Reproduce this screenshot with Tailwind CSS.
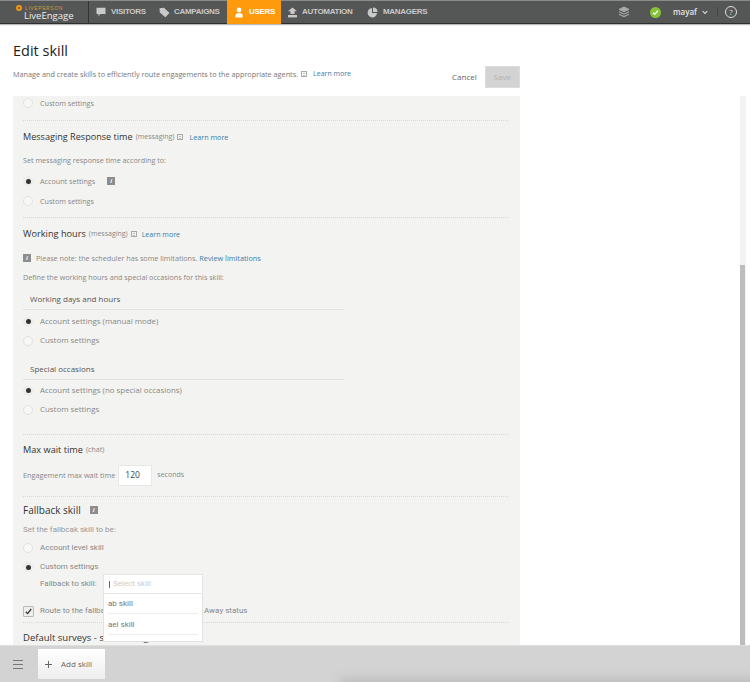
<!DOCTYPE html>
<html>
<head>
<meta charset="utf-8">
<script src="https://cdn.jsdelivr.net/npm/@tailwindcss/browser@4"></script>
</head>
<body class="font-['Open_Sans',sans-serif] bg-white">
<div class="relative flex flex-col w-[750px] h-[682px] overflow-hidden bg-white">

  <!-- Top navigation -->
  <header class="flex items-stretch h-[24px] shrink-0 bg-[#555656] border-t border-t-[#8a8a8a] border-b border-b-[#2e2e2e] shadow-[0_1px_1px_#bbb] font-['Liberation_Sans',sans-serif] font-bold text-[8px] tracking-[-0.3px] text-[#c9c9c9]">
    <div class="relative w-[89px] shrink-0 border-r border-r-[#333] tracking-normal">
      <div class="absolute left-[16px] top-[4px] flex items-center gap-[3px]">
        <span class="w-[6px] h-[6px] rounded-full border-[2px] border-[#f5970f]"></span>
        <span class="text-[5px] tracking-[0.6px] text-[#d9963a] font-normal leading-none">LIVEPERSON</span>
      </div>
      <div class="absolute left-[24px] top-[10px] text-[9.5px] leading-[10px] font-normal text-[#eee] font-['Open_Sans',sans-serif]">LiveEngage</div>
    </div>
    <a class="flex items-center w-[70px] shrink-0 pl-[7px] gap-[5px]">
      <svg class="w-[10px] h-[10px] shrink-0" viewBox="0 0 10 10"><path d="M0.5 0.8h9v6.2H4.2L2.5 9.4V7H.5z" fill="#c9c9c9"/></svg>
      <span>VISITORS</span>
    </a>
    <a class="flex items-center w-[68px] shrink-0 gap-[4px]">
      <svg class="w-[11px] h-[11px] shrink-0" viewBox="0 0 11 11"><path d="M.5 1.2l4.4-.5 5.6 5.4-4.2 4.2L.8 5.6z" fill="#c9c9c9"/></svg>
      <span class="whitespace-nowrap">CAMPAIGNS</span>
    </a>
    <a class="flex items-center w-[54px] shrink-0 pl-[8px] gap-[6px] bg-[#ff9a0d] text-white -mt-px -mb-px">
      <svg class="w-[8px] h-[11px] shrink-0" viewBox="0 0 9 12"><circle cx="4.5" cy="3.2" r="2.7" fill="#fff"/><path d="M.5 11.5V9C.5 7.5 2 6.8 4.5 6.8S8.5 7.5 8.5 9v2.5z" fill="#fff"/></svg>
      <span>USERS</span>
    </a>
    <a class="flex items-center w-[86px] shrink-0 pl-[6px] gap-[4px]">
      <svg class="w-[11px] h-[11px] shrink-0" viewBox="0 0 11 11"><path d="M5.5 .5L10 4.2H7.6V7H3.4V4.2H1z" fill="#c9c9c9"/><rect x="1" y="8" width="9" height="2.4" fill="#c9c9c9"/></svg>
      <span>AUTOMATION</span>
    </a>
    <a class="flex items-center shrink-0 gap-[5px]">
      <svg class="w-[11px] h-[11px] shrink-0" viewBox="0 0 11 11"><path d="M5 1A4.7 4.7 0 1 0 10 6H5z" fill="#c9c9c9"/><path d="M6 .5A4.6 4.6 0 0 1 10.5 5H6z" fill="#c9c9c9"/></svg>
      <span>MANAGERS</span>
    </a>
    <div class="ml-auto flex items-center pr-[13px] font-['Open_Sans',sans-serif] tracking-normal">
      <svg class="w-[12px] h-[12px] mr-[20px]" viewBox="0 0 12 12" fill="none" stroke="#a8a8a8"><path d="M6 1l5 2.4-5 2.4-5-2.4z" fill="#a8a8a8"/><path d="M1 5.8l5 2.4 5-2.4M1 8.2l5 2.4 5-2.4" stroke-width="1.2"/></svg>
      <span class="flex items-center justify-center w-[11px] h-[11px] rounded-full bg-[#84c436] mr-[12px]">
        <svg class="w-[7px] h-[7px]" viewBox="0 0 7 7" fill="none" stroke="#fff" stroke-width="1.4"><path d="M1 3.7l1.7 1.6L6 1.8"/></svg>
      </span>
      <span class="text-[8px] text-[#e4e4e4] font-semibold">mayaf</span>
      <svg class="w-[6px] h-[5px] ml-[5px]" viewBox="0 0 7 5" fill="none" stroke="#ddd" stroke-width="1.3"><path d="M.8 .9l2.7 2.7L6.2 .9"/></svg>
      <span class="w-px h-[10px] bg-[#444] ml-[9px] mr-[7px]"></span>
      <span class="flex items-center justify-center w-[12px] h-[12px] rounded-full border border-[#ddd] text-[8px] leading-none text-[#ddd] font-normal">?</span>
    </div>
  </header>

  <!-- Page header -->
  <div class="relative h-[72px] shrink-0 pl-[13px] text-[#777]">
    <h1 class="pt-[17px] text-[14.5px] leading-[20px] text-[#222] font-normal">Edit skill</h1>
    <p class="flex items-center mt-[7px] text-[7.28px] leading-[12px] text-[#777]">
      <span>Manage and create skills to efficiently route engagements to the appropriate agents.</span>
      <span class="inline-flex flex-col justify-center gap-px w-[6px] h-[6px] ml-[3px] border border-[#aaa] px-px"><i class="h-px bg-[#bbb]"></i><i class="h-px bg-[#bbb]"></i></span>
      <span class="ml-[6px] text-[7px] text-[#3a7ca8]">Learn more</span>
    </p>
    <div class="absolute left-[452px] top-[42px] flex items-center gap-[8px]">
      <span class="text-[8px] text-[#666] -mt-px">Cancel</span>
      <span class="flex items-center justify-center w-[35px] h-[22px] bg-[#d3d3d3] border border-[#dcdcdc] text-[8px] text-[#b2b2b2]">Save</span>
    </div>
  </div>

  <!-- Content -->
  <div class="relative flex-1 min-h-0 overflow-hidden">
    <!-- Scrollbar -->
    <div class="absolute left-[740px] top-0 w-[6px] h-full bg-[#f3f3f3]"></div>
    <div class="absolute left-[740px] top-[169px] w-[5px] bottom-0 bg-[#bdbdbd]"></div>

    <main class="ml-[13px] w-[507px] h-full overflow-hidden bg-[#f3f3f1] pl-[10px] pr-[12px] text-[7.2px] text-[#888]">

      <section class="h-[25px] border-b border-dotted border-b-[#d8d8d8]">
        <div class="flex items-center h-[14px]"><span class="w-[10px] h-[10px] rounded-full bg-[#f8f8f8] border border-[#e2e2e2] mr-[7px]"></span><span>Custom settings</span></div>
      </section>

      <section class="h-[97px] border-b border-dotted border-b-[#d8d8d8]">
        <div class="flex items-center h-[30px] pt-[2px]"><span class="text-[9.1px] text-[#333]">Messaging Response time</span><span class="ml-[3px] text-[7px]">(messaging)</span><span class="inline-flex flex-col justify-center gap-px w-[6px] h-[6px] ml-[3px] border border-[#aaa] px-px"><i class="h-px bg-[#bbb]"></i><i class="h-px bg-[#bbb]"></i></span><span class="ml-[6px] text-[7.2px] text-[#3a7ca8]">Learn more</span></div>
        <div class="flex items-center h-[18px]">Set messaging response time according to:</div>
        <div class="flex items-center h-[20px] mt-[2px]"><span class="flex items-center justify-center w-[10px] h-[10px] rounded-full bg-[#ececec] mr-[7px]"><i class="w-[5px] h-[5px] rounded-full bg-[#333]"></i></span><span>Account settings</span><span class="flex items-center justify-center w-[8px] h-[8px] ml-[12px] bg-[#8d8d8d] text-[6px] italic font-bold text-white">i</span></div>
        <div class="flex items-center h-[20px]"><span class="w-[10px] h-[10px] rounded-full bg-[#f8f8f8] border border-[#e2e2e2] mr-[7px]"></span><span>Custom settings</span></div>
      </section>

      <section class="h-[217px] border-b border-dotted border-b-[#d8d8d8]">
        <div class="flex items-center h-[30px] pt-[2px]"><span class="text-[9.2px] text-[#333]">Working hours</span><span class="ml-[3px] text-[7px]">(messaging)</span><span class="inline-flex flex-col justify-center gap-px w-[6px] h-[6px] ml-[3px] border border-[#aaa] px-px"><i class="h-px bg-[#bbb]"></i><i class="h-px bg-[#bbb]"></i></span><span class="ml-[5px] text-[7.1px] text-[#3a7ca8]">Learn more</span></div>
        <div class="flex items-center h-[20px]"><span class="flex items-center justify-center w-[8px] h-[8px] mr-[5px] bg-[#8d8d8d] text-[6px] italic font-bold text-white">i</span><span>Please note: the scheduler has some limitations.</span><span class="ml-[2px] text-[7.3px] text-[#3a7ca8]">Review limitations</span></div>
        <div class="flex items-center h-[18px]">Define the working hours and special occasions for this skill:</div>
        <div class="w-[321px] flex items-center h-[21px] mt-[3px] pl-[7px] border-b border-b-[#e2e2e2] text-[8px] text-[#555]">Working days and hours</div>
        <div class="flex items-center h-[19px] mt-[2px] text-[7.9px]"><span class="flex items-center justify-center w-[10px] h-[10px] rounded-full bg-[#ececec] mr-[7px]"><i class="w-[5px] h-[5px] rounded-full bg-[#333]"></i></span><span>Account settings (manual mode)</span></div>
        <div class="flex items-center h-[19px] text-[7.9px]"><span class="w-[10px] h-[10px] rounded-full bg-[#f8f8f8] border border-[#e2e2e2] mr-[7px]"></span><span>Custom settings</span></div>
        <div class="w-[321px] flex items-center h-[21px] mt-[9px] pl-[7px] border-b border-b-[#e2e2e2] text-[8px] text-[#555]">Special occasions</div>
        <div class="flex items-center h-[19px] mt-px text-[7.9px]"><span class="flex items-center justify-center w-[10px] h-[10px] rounded-full bg-[#ececec] mr-[7px]"><i class="w-[5px] h-[5px] rounded-full bg-[#333]"></i></span><span>Account settings (no special occasions)</span></div>
        <div class="flex items-center h-[19px] text-[7.9px]"><span class="w-[10px] h-[10px] rounded-full bg-[#f8f8f8] border border-[#e2e2e2] mr-[7px]"></span><span>Custom settings</span></div>
      </section>

      <section class="h-[62px] border-b border-dotted border-b-[#d8d8d8]">
        <div class="flex items-center h-[30px]"><span class="text-[9.2px] text-[#333]">Max wait time</span><span class="ml-[3px] text-[7px]">(chat)</span></div>
        <div class="flex items-center h-[21px]"><span class="text-[7.3px]">Engagement max wait time</span><span class="flex items-center w-[34px] h-[21px] ml-[3px] pl-[6px] bg-white border border-[#e8e8e8] text-[8.5px] text-[#444]">120</span><span class="ml-[5px] text-[7px]">seconds</span></div>
      </section>

      <section class="relative h-[126px] border-b border-dotted border-b-[#d8d8d8] font-['Roboto',sans-serif] text-[8px]">
        <div class="flex items-center h-[26px] font-['Open_Sans',sans-serif]"><span class="text-[10px] text-[#333]">Fallback skill</span><span class="flex items-center justify-center w-[8px] h-[8px] ml-[9px] bg-[#8d8d8d] text-[6px] italic font-bold text-white">i</span></div>
        <div class="flex items-center h-[12px] pt-[2px] text-[#999]">Set the fallbcak skill to be:</div>
        <div class="flex items-center h-[18px] mt-[4px]"><span class="w-[10px] h-[10px] rounded-full bg-[#f8f8f8] border border-[#e2e2e2] mr-[7px]"></span><span>Account level skill</span></div>
        <div class="flex items-center h-[20px]"><span class="flex items-center justify-center w-[10px] h-[10px] rounded-full bg-[#ececec] mr-[7px]"><i class="w-[5px] h-[5px] rounded-full bg-[#333]"></i></span><span>Custom settings</span></div>
        <div class="flex items-center h-[19px] -mt-[3px] pl-[17px]">Fallback to skill:</div>
        <div class="flex items-center h-[20px] mt-[8px]"><span class="flex items-center justify-center w-[11px] h-[11px] mr-[6px] bg-[#eee] border border-[#bbb] rounded-[1px]"><svg class="w-[7px] h-[7px]" viewBox="0 0 7 7" fill="none" stroke="#333" stroke-width="1.3"><path d="M.8 3.8l1.8 1.8L6.2 1"/></svg></span><span class="relative -z-0">Route to the fallback skill when the agent is in Away status</span></div>

        <!-- Dropdown overlay -->
        <div class="absolute left-[80px] top-[77px] w-[100px] z-10">
          <div class="flex items-center h-[20px] pl-[5px] bg-white border border-[#e6e6e6] text-[#ccc]"><i class="w-px h-[7px] bg-[#666] mr-[3px]"></i>Select skill</div>
          <ul class="bg-white border border-[#e2e2e2] border-t-0 px-[4px] h-[48px] text-[#777]">
            <li class="flex items-center h-[20px] border-b border-b-[#eee]">ab skill</li>
            <li class="flex items-center h-[21px] border-b border-b-[#eee] pt-px">aei skill</li>
          </ul>
        </div>
      </section>

      <section>
        <div class="flex items-center h-[28px] pt-[2px]"><span class="text-[9.5px] text-[#333] whitespace-nowrap">Default surveys - skill settings</span></div>
      </section>
    </main>
  </div>

  <!-- Bottom bar -->
  <footer class="relative flex items-center h-[37px] shrink-0 bg-[#d3d3d3] border-t border-t-[#dfdfdf] z-20 overflow-hidden">
    <div class="absolute left-[340px] -bottom-[6px] w-[420px] h-[10px] bg-[#bdbdbd] blur-[4px]"></div>
    <div class="relative flex flex-col gap-[3px] w-[10px] ml-[13px]"><i class="h-px bg-[#777]"></i><i class="h-px bg-[#777]"></i><i class="h-px bg-[#777]"></i></div>
    <button class="relative flex items-center w-[67px] h-[30px] ml-[15px] pl-[7px] bg-gradient-to-b from-[#fff] to-[#eee] text-[8px] text-[#666]">
      <svg class="w-[7px] h-[7px] mr-[9px]" viewBox="0 0 7 7" stroke="#666"><path d="M3.5 0v7M0 3.5h7"/></svg>
      Add skill
    </button>
  </footer>
</div>
</body>
</html>
